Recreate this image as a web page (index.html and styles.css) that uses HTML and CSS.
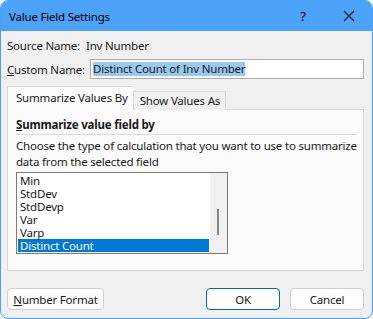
FILE: index.html
```html
<!DOCTYPE html>
<html lang="en">
<head>
    <meta charset="UTF-8">
    <title>Value Field Settings</title>
    <link rel="stylesheet" href="styles.css">
</head>
<body>
    <div class="window">
        <div class="titlebar">
            <span class="title">Value Field Settings</span>
            <span class="help">?</span>
            <span class="close">
                <svg width="12" height="12" viewBox="0 0 12 12"><path d="M1 1 L11 11 M11 1 L1 11" stroke="#1a1a1a" stroke-width="1.1" fill="none"/></svg>
            </span>
        </div>
        <div class="content">
            <div class="row source">
                <span class="label">Source Name:</span>
                <span>Inv Number</span>
            </div>
            <div class="row custom">
                <span class="label"><u>C</u>ustom Name:</span>
                <div class="textbox"><span class="sel">Distinct Count of Inv Number</span></div>
            </div>
            <div class="tabs">
                <div class="tab active">Summarize Values By</div>
                <div class="tab">Show Values As</div>
            </div>
            <div class="panel">
                <div class="heading"><u>S</u>ummarize value field by</div>
                <p class="desc">Choose the type of calculation that you want to use to summarize data from the selected field</p>
                <div class="listbox">
                    <ul class="items">
                        <li>Min</li>
                        <li>StdDev</li>
                        <li>StdDevp</li>
                        <li>Var</li>
                        <li>Varp</li>
                        <li class="selected">Distinct Count</li>
                    </ul>
                    <div class="scrollbar"><div class="thumb"></div></div>
                </div>
            </div>
            <div class="buttons">
                <button class="btn wide"><u>N</u>umber Format</button>
                <span class="spacer"></span>
                <button class="btn default">OK</button>
                <button class="btn">Cancel</button>
            </div>
        </div>
    </div>
</body>
</html>
```

FILE: styles.css
```css
body {
    margin: 0;
    background: #ffffff;
    font-family: "Noto Sans", "Open Sans", sans-serif;
    font-size: 11.5px;
    letter-spacing: -0.2px;
    color: #1a1a1a;
}
.window {
    width: 371px;
    height: 317px;
    border: 1px solid #48a0f8;
    border-radius: 8px;
    background: #f0f0f0;
    overflow: hidden;
}
.titlebar {
    height: 30px;
    background: #4ca2f8;
    display: flex;
    align-items: center;
    color: #000;
}
.title {
    padding-left: 8px;
    flex: 1;
    font-size: 11.5px;
}
.help {
    width: 46px;
    text-align: center;
    font-size: 13px;
}
.close {
    width: 46px;
    display: flex;
    justify-content: center;
}
.content {
    padding: 0 8px 0 6px;
}
.row {
    display: flex;
    align-items: center;
    white-space: nowrap;
}
.source {
    margin-top: 6px;
    height: 16px;
}
.source .label {
    width: 79px;
}
.custom {
    margin-top: 6px;
    height: 20px;
}
.custom .label {
    width: 83px;
}
.textbox {
    flex: 1;
    height: 18px;
    border: 1px solid #adadad;
    background: #fff;
    display: flex;
    align-items: center;
    padding-left: 2px;
}
.sel {
    background: #99c9ef;
    line-height: 14px;
}
.tabs {
    display: flex;
    align-items: flex-end;
    margin-top: 8px;
    height: 23px;
    position: relative;
    z-index: 1;
    white-space: nowrap;
}
.tab {
    border: 1px solid #d9d9d9;
    border-bottom: none;
    padding: 0 5px 0 6px;
    height: 18px;
    line-height: 18px;
    background: #f0f0f0;
}
.tab.active {
    height: 23px;
    line-height: 22px;
    background: #fbfbfb;
    border-right: none;
    padding: 0 5px 0 8px;
}
.panel {
    height: 160px;
    border: 1px solid #d9d9d9;
    background: #fbfbfb;
    margin-top: -1px;
    padding: 0 6px 0 8px;
}
.heading {
    font-weight: bold;
    margin-top: 7px;
    line-height: 16px;
    padding-bottom: 1px;
    border-bottom: 1px solid #d9d9d9;
}
.desc {
    margin: 3px 0 0;
    line-height: 16px;
}
.listbox {
    margin-top: 2px;
    width: 210px;
    height: 80px;
    border: 1px solid #7a7a7a;
    background: #fff;
    display: flex;
}
.items {
    list-style: none;
    margin: 0;
    padding: 1px 1px 0;
    flex: 1;
}
.items li {
    height: 13px;
    line-height: 13px;
    padding-left: 2px;
}
.items li.selected {
    background: #0078d7;
    color: #fff;
}
.scrollbar {
    width: 17px;
    background: #f0f0f0;
    position: relative;
}
.thumb {
    position: absolute;
    left: 7px;
    top: 36px;
    width: 2px;
    height: 26px;
    background: #8a8a8a;
}
.buttons {
    display: flex;
    margin-top: 17px;
    gap: 10px;
}
.spacer {
    flex: 1;
}
.btn {
    font-family: inherit;
    font-size: 11.5px;
    letter-spacing: -0.2px;
    color: #1a1a1a;
    width: 74px;
    height: 22px;
    padding: 0;
    border: 1px solid #d0d0d0;
    border-radius: 4px;
    background: #fdfdfd;
}
.btn.wide {
    width: 97px;
}
.btn.default {
    border: 1px solid #0067c0;
}
```
